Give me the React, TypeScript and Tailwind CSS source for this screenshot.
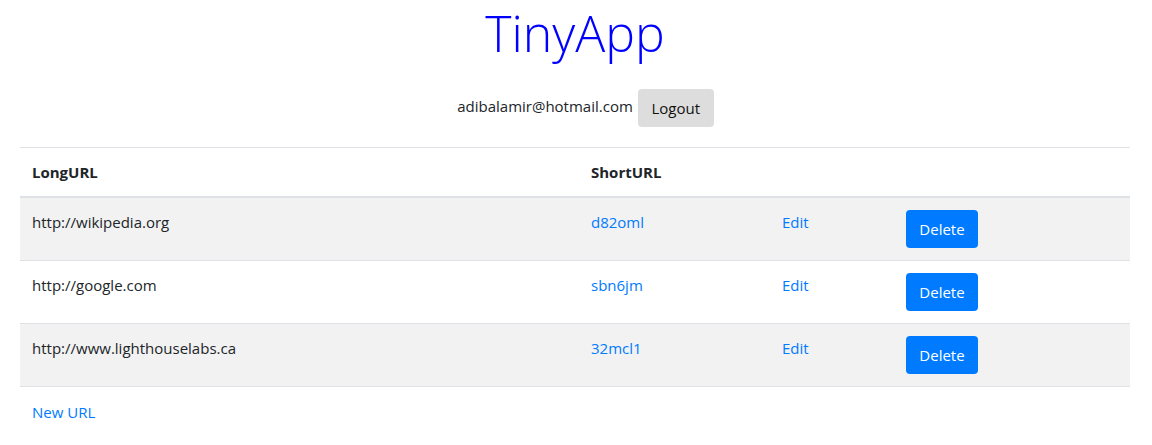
// TinyApp url index page

import React from "react";

interface UrlRow {
  shortURL: string;
  longURL: string;
}

const urls: UrlRow[] = [
  { shortURL: "d82oml", longURL: "http://wikipedia.org" },
  { shortURL: "sbn6jm", longURL: "http://google.com" },
  { shortURL: "32mcl1", longURL: "http://www.lighthouselabs.ca" },
];

const App = () => {
  return (
    <div
      className="min-h-[445px] bg-white text-[#212529] text-base"
      style={{ fontFamily: '"Open Sans", "Noto Sans", sans-serif' }}
    >
      {/* header */}
      <header className="flex flex-col items-center">
        <h1 className="text-[50px] font-light leading-[60px] text-[#0000ff] mt-[3px] mr-[2px]">
          TinyApp
        </h1>
        <div className="flex items-center gap-[5px] mt-[26px] pl-[19px]">
          <span className="text-[15px] -mt-[4px]">adibalamir@hotmail.com</span>
          <button className="bg-[#dddddd] rounded-[4px] h-[38px] w-[76px] text-[15px] text-[#111]">
            Logout
          </button>
        </div>
      </header>

      {/* urls table */}
      <main className="pl-[20px] pr-[22px] mt-[20px]">
        <table className="w-full border-collapse text-[15px]">
          <thead>
            <tr className="border-t border-[#dee2e6] border-b-2">
              <th className="w-[559px] p-3 text-left font-bold leading-[24px]">LongURL</th>
              <th className="w-[191px] p-3 text-left font-bold leading-[24px]">ShortURL</th>
              <th className="w-[124px] p-3"></th>
              <th className="p-3"></th>
            </tr>
          </thead>
          <tbody>
            {urls.map((url, i) => (
              <tr
                key={url.shortURL}
                className={
                  "border-t border-b border-[#dee2e6] " +
                  (i % 2 === 0 ? "bg-[#f2f2f2]" : "bg-white")
                }
              >
                <td className="p-3 align-top leading-[24px]">{url.longURL}</td>
                <td className="p-3 align-top leading-[24px]">
                  <a href="#" className="text-[#007bff]">
                    {url.shortURL}
                  </a>
                </td>
                <td className="p-3 align-top leading-[24px]">
                  <a href="#" className="text-[#007bff]">
                    Edit
                  </a>
                </td>
                <td className="p-3 align-top">
                  <button className="bg-[#007bff] text-white rounded-[4px] h-[38px] w-[72px]">
                    Delete
                  </button>
                </td>
              </tr>
            ))}
          </tbody>
        </table>
        <div className="px-3 pt-[13px]">
          <a href="#" className="text-[#007bff] text-[15px]">
            New URL
          </a>
        </div>
      </main>
    </div>
  );
};

export default App;
